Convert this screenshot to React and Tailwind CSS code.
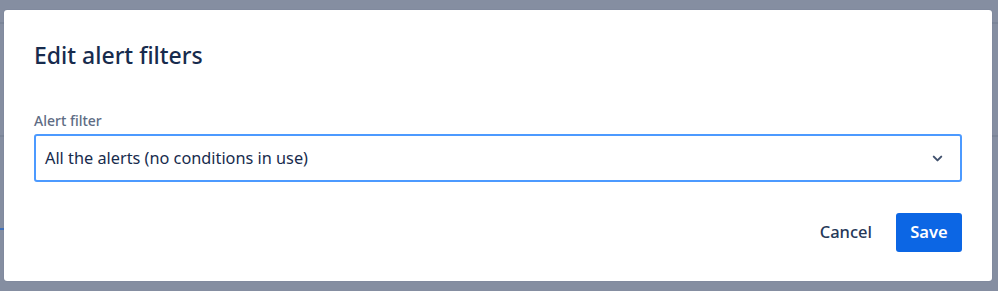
import { ChevronDown } from 'lucide-react';

const font = { fontFamily: '"Noto Sans", "Open Sans", sans-serif' };

const Backdrop = () => (
  <div className="absolute inset-0 flex flex-col bg-[#858ea1]">
    <div className="h-[22px]" />
    <div className="h-[2px] bg-[#7b8598]" />
    <div className="h-[111px]" />
    <div className="h-[2px] bg-[#7b8598]" />
    <div className="h-[91px]" />
    <div className="h-[2px] w-[4px] bg-[#3f6fb8]" />
  </div>
);

const App = () => {
  return (
    <div className="relative h-[291px] w-[998px] overflow-hidden" style={font}>
      <Backdrop />

      {/* Modal */}
      <div className="absolute left-[4px] top-[10px] flex h-[271px] w-[988px] flex-col rounded-[3px] bg-white px-[30px] shadow-[0_0_1px_rgba(9,30,66,0.3)]">
        <h1 className="mt-[29px] h-[32px] text-[23px] font-medium leading-[32px] text-[#172b4d]">
          Edit alert filters
        </h1>

        <label className="mt-[40px] h-[20px] text-[14px] font-medium leading-[20px] text-[#5e6c84]">
          Alert filter
        </label>

        <div className="mt-[3px] flex h-[48px] items-center justify-between rounded-[3px] border-2 border-[#4c9aff] pl-[9px] pr-[15px]">
          <span className="text-[16.3px] leading-[24px] text-[#172b4d]">
            All the alerts (no conditions in use)
          </span>
          <ChevronDown className="h-[15px] w-[15px] text-[#42526e]" strokeWidth={3.2} />
        </div>

        <div className="mt-[31px] flex items-center justify-end gap-[8px]">
          <button className="h-[39px] rounded-[3px] px-[16px] text-[16.5px] font-medium text-[#253858]">
            Cancel
          </button>
          <button className="h-[39px] w-[66px] rounded-[3px] bg-[#0c66e4] text-[16.5px] font-semibold text-white">
            Save
          </button>
        </div>
      </div>
    </div>
  );
};

export default App;
